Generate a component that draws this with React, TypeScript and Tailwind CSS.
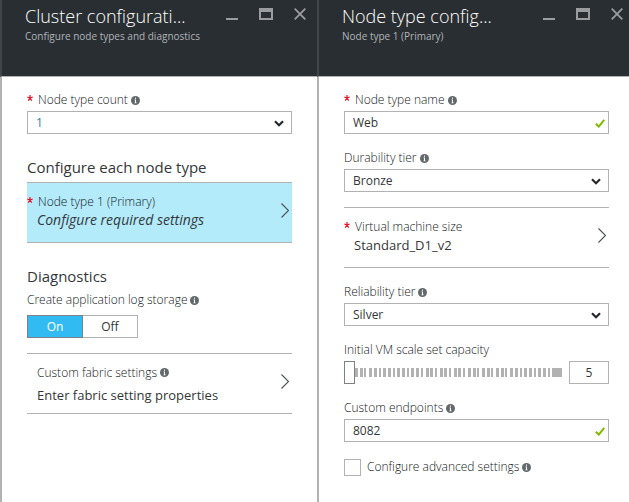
import { useState, type ReactNode } from "react";

function InfoIcon() {
  return (
    <svg viewBox="0 0 9 9" className="size-[9px] shrink-0" role="img" aria-label="Info">
      <circle cx="4.5" cy="4.5" r="4.5" fill="#63686b" />
      <path d="M4 1.5h1v1.3H4zM3.5 3.6H5v3h.6v.7H3.4v-.7H4V4.3h-.5z" fill="#fff" />
    </svg>
  );
}

function Star() {
  return (
    <svg viewBox="0 0 6 6" className="-mt-1 mr-[5px] size-[6px] shrink-0" aria-hidden="true">
      <path d="M3 0v3M3 3L.3 2M3 3l2.7-1M3 3L1.3 5.6M3 3l1.7 2.6" stroke="#e81123" strokeWidth="1.2" />
    </svg>
  );
}

function Chevron() {
  return (
    <svg viewBox="0 0 10 7" className="pointer-events-none absolute top-[9px] right-2 h-[7px] w-[10px]" aria-hidden="true">
      <path d="M1 1.2l4 4 4-4" fill="none" stroke="#25292c" strokeWidth="2.2" />
    </svg>
  );
}

function Check() {
  return (
    <svg viewBox="0 0 10 9" className="pointer-events-none absolute top-[8px] right-1 h-[9px] w-[10px]" aria-hidden="true">
      <path d="M.8 4.8l3 2.8L9.2.8" fill="none" stroke="#7fba00" strokeWidth="2" />
    </svg>
  );
}

const line = "border-[#b2b2b2]";
const box = `block h-[23px] w-full appearance-none rounded-none border ${line} bg-white pl-2 text-[12px] outline-none`;

function Label({ id, required, info, children }: { id: string; required?: boolean; info?: boolean; children: ReactNode }) {
  return (
    <label htmlFor={id} className="flex h-4 items-center text-[12px] leading-4 font-light whitespace-nowrap text-[#14181b]">
      {required && <Star />}
      <span className="mr-[3px]">{children}</span>
      {info && <InfoIcon />}
    </label>
  );
}

function SelectField({ id, label, required, options, blue }: { id: string; label: string; required?: boolean; options: string[]; blue?: boolean }) {
  return (
    <div>
      <Label id={id} required={required} info>{label}</Label>
      <div className="relative mt-[3px]">
        <select id={id} className={`${box} ${blue ? "text-[#3d7d9c]" : "text-[#33373a]"}`}>
          {options.map((o) => <option key={o}>{o}</option>)}
        </select>
        <Chevron />
      </div>
    </div>
  );
}

function TextField({ id, label, required, value }: { id: string; label: string; required?: boolean; value: string }) {
  return (
    <div>
      <Label id={id} required={required} info>{label}</Label>
      <div className="relative mt-[3px]">
        <input id={id} type="text" defaultValue={value} className={`${box} text-[#33373a]`} />
        <Check />
      </div>
    </div>
  );
}

function Selector({ title, value, required, info, active }: { title: string; value: string; required?: boolean; info?: boolean; active?: boolean }) {
  return (
    <button type="button" className={`flex h-[61px] w-full items-center border-y ${line} text-left ${active ? "bg-[#b3ebfb]" : ""}`}>
      <span className={`flex flex-1 flex-col ${info ? "gap-1 pt-0.5" : "pb-px"}`}>
        <span className={`flex h-4 items-center text-[12px] leading-4 font-light text-[#14181b] ${required ? "" : "pl-[10px]"}`}>
          {required && <Star />}
          <span className="mr-[3px]">{title}</span>
          {info && <InfoIcon />}
        </span>
        <span className={`pl-[10px] leading-5 text-[#33373a] ${active ? "text-[14px] italic" : "text-[13px]"}`}>{value}</span>
      </span>
      <svg viewBox="0 0 8 15" className="mr-[3px] mb-1 h-[15px] w-2" aria-hidden="true">
        <path d="M.5.5l7 7-7 7" fill="none" stroke="#4a4f53" strokeWidth="1.1" />
      </svg>
    </button>
  );
}

function Blade({ title, subtitle, last, children }: { title: string; subtitle: string; last?: boolean; children: ReactNode }) {
  return (
    <section className={`flex min-w-0 flex-col border-l-2 ${line}`}>
      <header className={`-ml-0.5 flex h-[77px] border-b border-l-2 border-b-[#b2b2b2] border-l-[#404549] bg-[#292e32] pl-[23px] ${last ? "pr-[6px]" : "pr-[11px]"}`}>
        <div className="min-w-0 flex-1 pt-1">
          <h1 className="truncate text-[18px] leading-[25px] font-light text-white">{title}</h1>
          <p className="truncate text-[10px] leading-[14px] font-medium text-[#b0b4b7]">{subtitle}</p>
        </div>
        <div className="flex items-start gap-[21px] pt-2 text-[#9a9da0]">
          <button type="button" aria-label="Minimize">
            <svg viewBox="0 0 12 12" className="size-3"><path d="M0 11h12" stroke="currentColor" strokeWidth="2" /></svg>
          </button>
          <button type="button" aria-label="Maximize">
            <svg viewBox="0 0 14 12" className="h-3 w-[14px]"><path d="M0 0h14v12H0zM2 4v6h10V4z" fillRule="evenodd" fill="currentColor" /></svg>
          </button>
          <button type="button" aria-label="Close">
            <svg viewBox="0 0 12 12" className="size-3"><path d="M.7.7l10.6 10.6M11.3.7L.7 11.3" stroke="currentColor" strokeWidth="1.8" /></svg>
          </button>
        </div>
      </header>
      <div className={`flex flex-1 flex-col pt-[15px] pl-[25px] ${last ? "pr-5" : "pr-[25px]"}`}>{children}</div>
    </section>
  );
}

export default function App() {
  const [log, setLog] = useState("On");
  const [capacity, setCapacity] = useState(5);
  return (
    <main className="grid min-h-screen grid-cols-[317fr_312fr] bg-white font-['Open_Sans','Noto_Sans',sans-serif]">
      <Blade title="Cluster configurati..." subtitle="Configure node types and diagnostics">
        <SelectField id="count" label="Node type count" required options={["1", "2", "3"]} blue />
        <h2 className="mt-[21px] mb-[3px] text-[15px] leading-6 text-[#33373a]">Configure each node type</h2>
        <Selector title="Node type 1 (Primary)" value="Configure required settings" required active />
        <h2 className="mt-[21px] mb-1 text-[15px] leading-6 text-[#33373a]">Diagnostics</h2>
        <Label id="log-on" info>Create application log storage</Label>
        <div className="mt-[7px] mb-[15px] flex h-[23px] text-[12px]">
          {["On", "Off"].map((v) => (
            <button
              key={v}
              id={v === "On" ? "log-on" : "log-off"}
              type="button"
              aria-pressed={log === v}
              onClick={() => setLog(v)}
              className={`w-14 border ${log === v ? "z-10 border-[#7c8286] bg-[#32bbf3] text-white" : "border-[#b2b2b2] text-[#33373a]"} ${v === "Off" ? "-ml-px" : ""}`}
            >
              {v}
            </button>
          ))}
        </div>
        <Selector title="Custom fabric settings" value="Enter fabric setting properties" info />
      </Blade>
      <Blade title="Node type config..." subtitle="Node type 1 (Primary)" last>
        <TextField id="name" label="Node type name" required value="Web" />
        <div className="mt-4 mb-[15px]">
          <SelectField id="durability" label="Durability tier" options={["Bronze", "Silver", "Gold"]} />
        </div>
        <Selector title="Virtual machine size" value="Standard_D1_v2" required />
        <div className="my-4">
          <SelectField id="reliability" label="Reliability tier" options={["Silver", "Bronze", "Gold"]} />
        </div>
        <Label id="capacity">Initial VM scale set capacity</Label>
        <div className="mt-[3px] mb-4 flex gap-[7px]">
          <div className="relative h-[23px] flex-1">
            <svg viewBox="0 0 218 9" preserveAspectRatio="none" className="absolute top-[7px] h-[9px] w-full" aria-hidden="true">
              {Array.from({ length: 42 }, (_, i) => (
                <rect key={i} x={Math.round(11 + i * 4.7)} y="0" width={i % 3 === 2 ? 2 : 3} height="9" fill="#b2b2b2" />
              ))}
              <rect x="208" y="0" width="10" height="9" fill="#b2b2b2" />
            </svg>
            <input
              id="capacity"
              type="range"
              min="5"
              max="100"
              value={capacity}
              onChange={(e) => setCapacity(Number(e.target.value))}
              className="relative block h-[23px] w-full appearance-none bg-transparent [&::-webkit-slider-thumb]:h-[23px] [&::-webkit-slider-thumb]:w-[11px] [&::-webkit-slider-thumb]:appearance-none [&::-webkit-slider-thumb]:border [&::-webkit-slider-thumb]:border-[#7c8286] [&::-webkit-slider-thumb]:bg-white"
            />
          </div>
          <input
            type="text"
            aria-label="Capacity"
            value={capacity}
            onChange={(e) => setCapacity(Number(e.target.value) || 5)}
            className={`h-[23px] w-10 border ${line} text-center text-[12px] text-[#33373a]`}
          />
        </div>
        <TextField id="endpoints" label="Custom endpoints" value="8082" />
        <div className="mt-[17px] flex items-start gap-[6px]">
          <input id="advanced" type="checkbox" className={`size-[17px] appearance-none border ${line} bg-white checked:bg-[#32bbf3]`} />
          <Label id="advanced" info>Configure advanced settings</Label>
        </div>
      </Blade>
    </main>
  );
}
